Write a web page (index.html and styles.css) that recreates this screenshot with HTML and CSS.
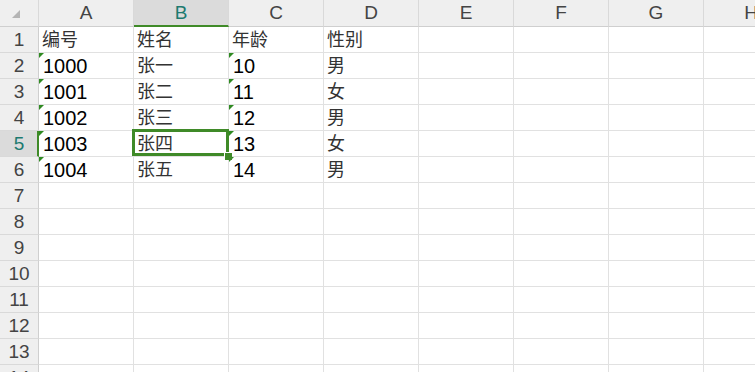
FILE: index.html
```html
<!DOCTYPE html>
<html lang="zh-CN">
<head>
    <meta charset="UTF-8">
    <meta name="viewport" content="width=device-width, initial-scale=1.0">
    <title>Sheet1</title>
    <link rel="stylesheet" href="styles.css">
</head>
<body>
    <div class="sheet" id="sheet"></div>

    <script>
        const data = [
            ["编号", "姓名", "年龄", "性别"],
            ["1000", "张一", "10", "男"],
            ["1001", "张二", "11", "女"],
            ["1002", "张三", "12", "男"],
            ["1003", "张四", "13", "女"],
            ["1004", "张五", "14", "男"]
        ];
        const columns = ["A", "B", "C", "D", "E", "F", "G", "H"];
        const rowCount = 14;
        const active = { row: 5, col: 1 };

        function buildSheet() {
            const sheet = document.getElementById('sheet');
            let html = '<div class="corner"><span class="select-all"></span></div>';

            // column headers
            columns.forEach((name, c) => {
                const cls = c === active.col ? 'col-head active' : 'col-head';
                html += '<div class="' + cls + '">' + name + '</div>';
            });

            // rows
            for (let r = 1; r <= rowCount; r++) {
                const headCls = r === active.row ? 'row-head active' : 'row-head';
                html += '<div class="' + headCls + '">' + r + '</div>';
                const values = data[r - 1] || [];
                columns.forEach((name, c) => {
                    let cls = 'cell';
                    const text = values[c] || '';
                    if (/^\d+$/.test(text)) cls += ' num-text';
                    if (r === active.row && c === active.col) cls += ' selected';
                    html += '<div class="' + cls + '">' + text + '</div>';
                });
            }
            sheet.innerHTML = html;
        }

        buildSheet();
    </script>
</body>
</html>
```

FILE: styles.css
```css
body {
    margin: 0;
    background: #fff;
    overflow: hidden;
    font-family: "Liberation Sans", "Noto Sans CJK SC", sans-serif;
}
.sheet {
    display: grid;
    grid-template-columns: 39px repeat(8, 95px);
    grid-template-rows: 27px;
    grid-auto-rows: 26px;
    width: max-content;
}
.corner, .col-head, .row-head {
    background: #efefef;
    color: #444;
    box-sizing: border-box;
    border-right: 1px solid #d9d9d9;
    border-bottom: 1px solid #d9d9d9;
}
.corner {
    position: relative;
    border-bottom-color: #cfcfcf;
}
.select-all {
    position: absolute;
    left: 12px;
    top: 10px;
    width: 0;
    height: 0;
    border-left: 8px solid transparent;
    border-bottom: 8px solid #b4b4b4;
}
.col-head {
    font-size: 19px;
    line-height: 26px;
    text-align: center;
    border-bottom-color: #cfcfcf;
}
.col-head.active {
    background: #dbdbdb;
    color: #1d7a70;
    border-bottom: 2px solid #3f8a28;
    line-height: 25px;
}
.row-head {
    font-size: 19px;
    line-height: 26px;
    text-align: center;
    border-right-color: #cfcfcf;
}
.row-head.active {
    background: #dbdbdb;
    color: #1d7a70;
    border-right: 2px solid #3f8a28;
    padding-left: 1px;
}
.cell {
    position: relative;
    box-sizing: border-box;
    border-right: 1px solid #e1e1e1;
    border-bottom: 1px solid #e1e1e1;
    padding: 1px 3px 0 3px;
    font-size: 18px;
    line-height: 25px;
    color: #333;
    white-space: nowrap;
}
.cell.num-text {
    padding: 0 3px 0 4px;
    font-size: 20px;
    line-height: 26px;
    color: #000;
}
.cell.num-text::before {
    content: "";
    position: absolute;
    left: 0;
    top: 0;
    border-top: 5px solid #2f8a22;
    border-right: 5px solid transparent;
}
.cell.selected {
    z-index: 1;
}
.cell.selected::after {
    content: "";
    position: absolute;
    left: -2px;
    top: -2px;
    right: -1px;
    bottom: 0;
    border: 3px solid #3f8a28;
    box-sizing: border-box;
}
/* fill handle in the lower right corner */
.cell.selected::before {
    content: "";
    position: absolute;
    right: -4px;
    bottom: -4px;
    width: 8px;
    height: 8px;
    background: #3f8a28;
    border: 1px solid #fff;
    border-width: 1px 0 0 1px;
    box-sizing: border-box;
    z-index: 2;
}
```
